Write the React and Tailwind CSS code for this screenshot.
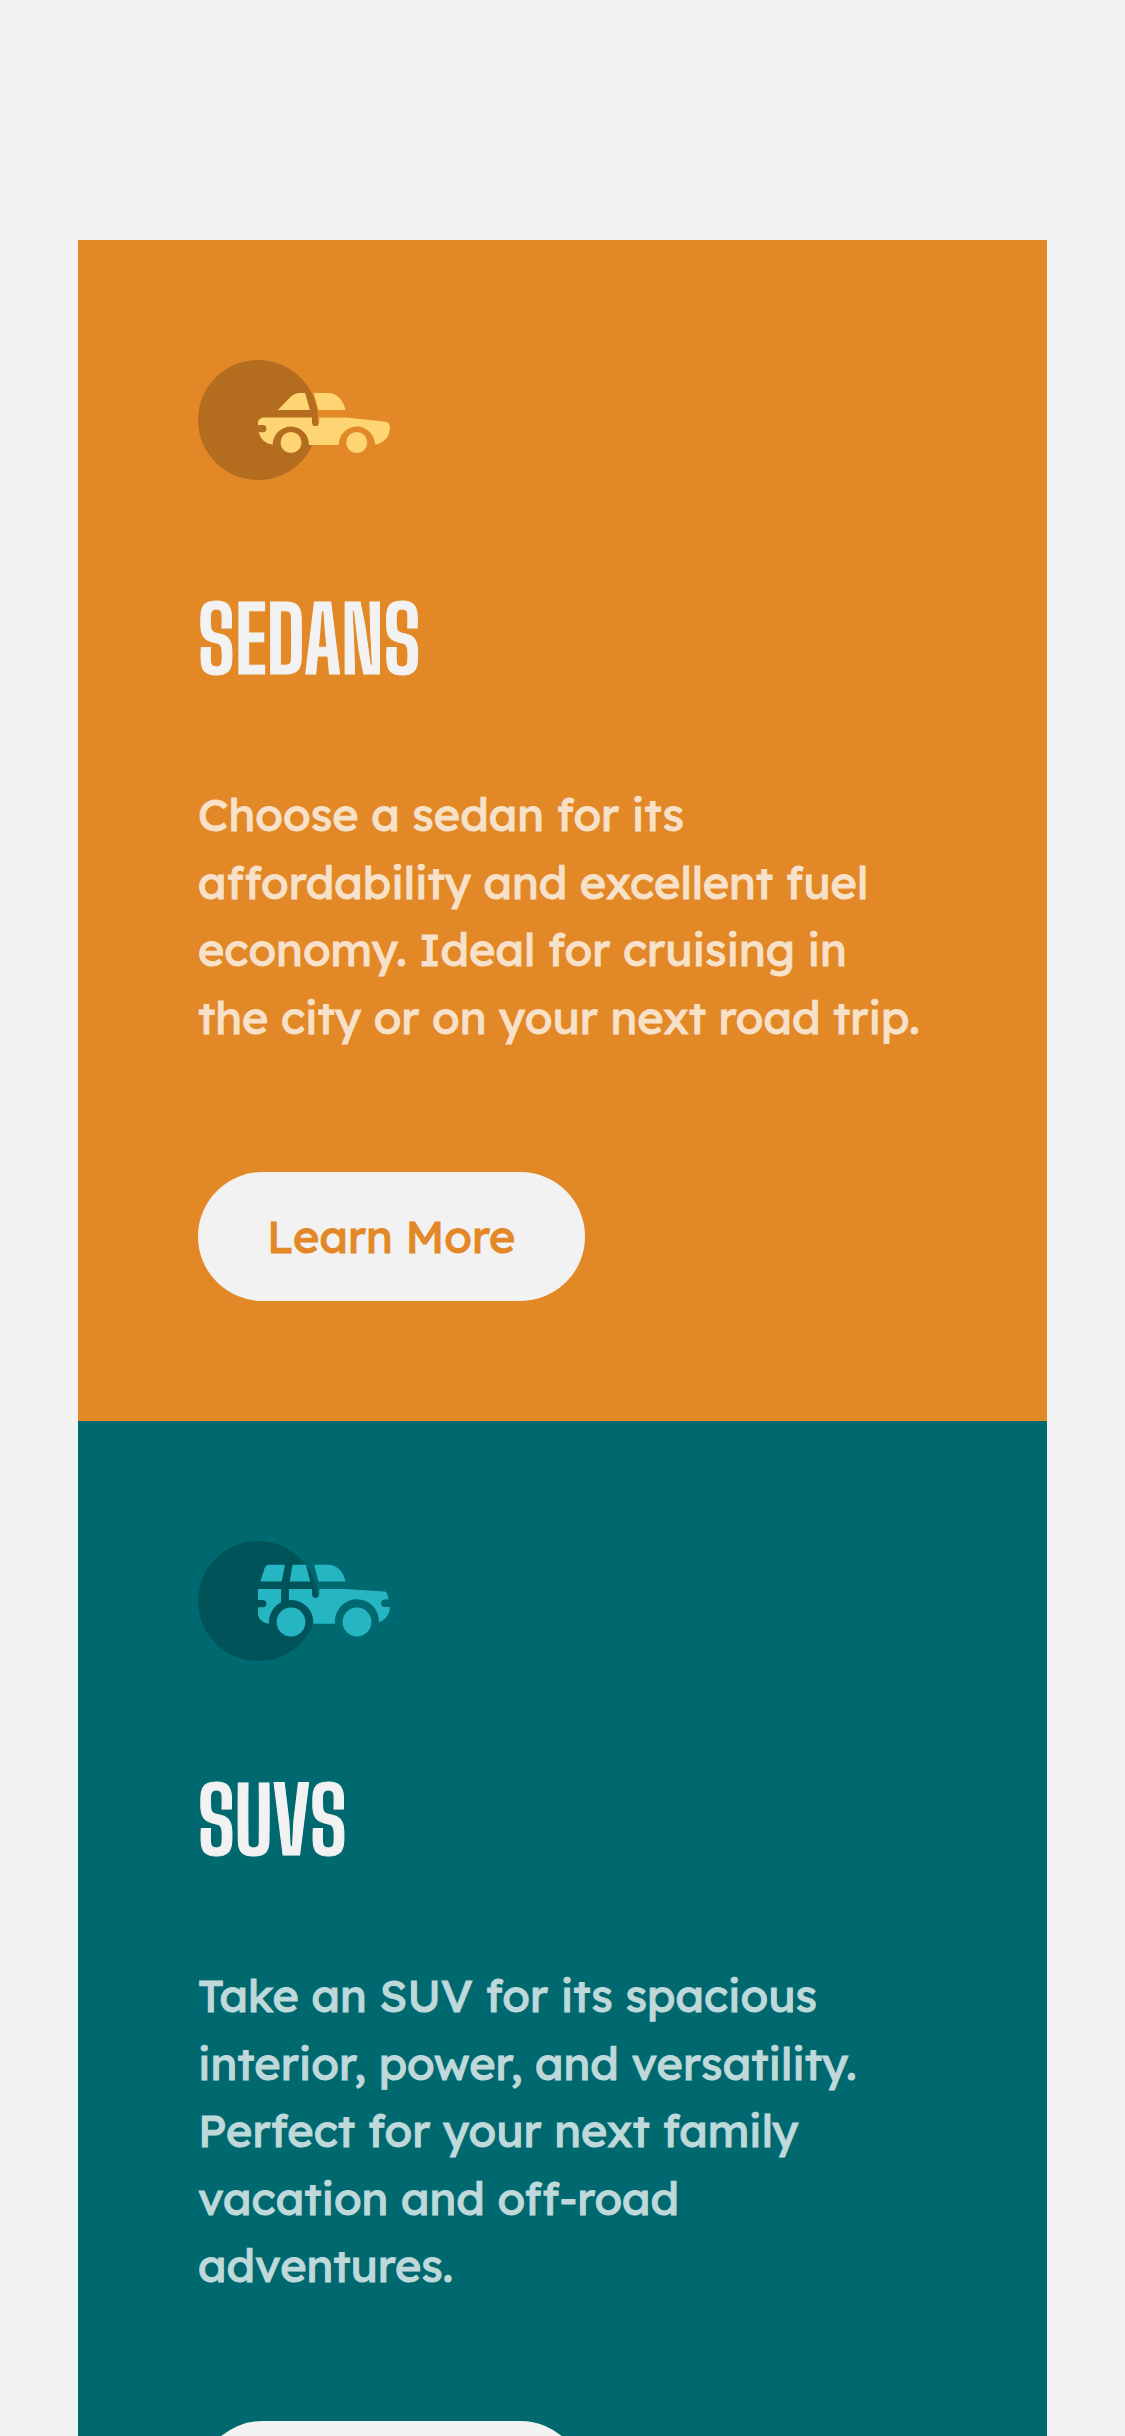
import React from "react";

function SedanIcon() {
  return (
    <svg viewBox="0 0 64 40" className="h-[120px] w-48" aria-hidden="true">
      <circle cx="20" cy="20" r="20" fill="#000" fillOpacity=".2" />
      <g fill="#FFD473">
        <path d="M26.6 16.7l3.5-3.6C31.4 11.7 32.4 11 33.8 11h1.9l1.6 5.7z" />
        <path d="M38.6 11h4.7c3 0 5 2.2 5.9 5.7h-9.1z" />
        <path d="M22 19.2h16v1.6a1.2 1.2 0 0 0 2.4 0v-1.6h8.8L62 20.5c1.2.1 2 .8 2 2-.2 3.1-1.7 5.1-5 5.7a6.05 6.05 0 1 0-12.1.1H37a6.05 6.05 0 1 0-12.1-.1c-2.5-.3-4-1.8-4.7-4.1h1.4a1.2 1.2 0 0 0 0-2.4H20v-.5c0-1.2.8-2 2-2z" />
        <circle cx="31" cy="27.5" r="3.5" />
        <circle cx="52.9" cy="27.5" r="3.5" />
      </g>
    </svg>
  );
}

function SuvIcon() {
  return (
    <svg viewBox="0 0 64 40" className="h-[120px] w-48" aria-hidden="true">
      <circle cx="20" cy="20" r="20" fill="#000" fillOpacity=".2" />
      <g fill="#26B5C3">
        <path d="M20.8 13.5L22.2 9.1C22.5 8.3 22.9 7.9 23.6 7.9H29L27.9 13.5z" />
        <path d="M31.5 7.9H36L37.4 13.5H30.6z" />
        <path d="M38.7 7.9h4.6c3 0 5.1 2.2 5.9 5.6h-9z" />
        <path d="M20 16h7.7v4.4a7.3 7.3 0 0 0-4 7.2c-2.3-.3-3.7-1.7-3.7-3.5v-2h1.6a1.2 1.2 0 0 0 0-2.4H20z" />
        <path d="M30.3 16H38v1.7a1.2 1.2 0 0 0 2.4 0V16h8.8l13 .8c.8.1 1.1 1.2 1.3 2.7h-1.2a1.25 1.25 0 0 0 0 2.5H64c-.2 2.6-1.5 4.400-3.700 5.100a7.330 7.330 0 1 0-14.600.5h-7.300a7.300 7.300 0 0 0-8.100-7.900z" />
        <circle cx="31" cy="27" r="4.8" />
        <circle cx="53" cy="27" r="4.8" />
      </g>
    </svg>
  );
}

const cards = [
  {
    title: "Sedans",
    text: "Choose a sedan for its affordability and excellent fuel economy. Ideal for cruising in the city or on your next road trip.",
    Icon: SedanIcon,
    background: "bg-[#E28826]",
    accent: "text-[#E28826]",
  },
  {
    title: "SUVs",
    text: "Take an SUV for its spacious interior, power, and versatility. Perfect for your next family vacation and off-road adventures.",
    Icon: SuvIcon,
    background: "bg-[#006970]",
    accent: "text-[#006970]",
  },
];

export default function App() {
  return (
    <main className="h-screen overflow-hidden bg-[#F2F2F2] px-[78px] pt-60 font-['Lexend_Deca',Inter,sans-serif] text-[45px] leading-normal [-webkit-text-stroke:1px]">
      {cards.map(({ title, text, Icon, background, accent }) => (
        <section
          key={title}
          className={`flex flex-col items-start p-[120px] ${background}`}
        >
          <Icon />
          <h2 className="mt-[99px] font-['Big_Shoulders_Display','Roboto_Condensed',sans-serif] text-[90px] leading-[120px] font-bold text-[#F2F2F2] uppercase">
            {title}
          </h2>
          <p className="mt-[82px] text-white opacity-75">{text}</p>
          <button
            type="button"
            className={`mt-[121px] rounded-full bg-[#F2F2F2] px-[69px] py-[31px] leading-[67px] ${accent}`}
          >
            Learn More
          </button>
        </section>
      ))}
    </main>
  );
}
